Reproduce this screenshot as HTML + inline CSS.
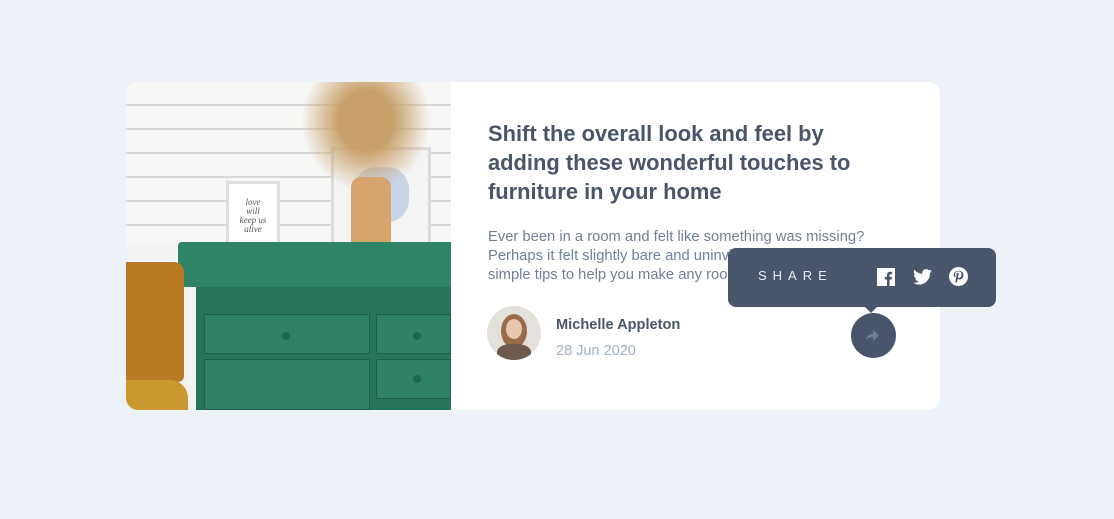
<!DOCTYPE html>
<html><head><meta charset="utf-8"><style>
*{margin:0;padding:0;box-sizing:border-box}
body{width:1114px;height:519px;background:#ecf2f8;font-family:"Liberation Sans",sans-serif;position:relative;overflow:hidden}
.card{position:absolute;left:126px;top:82px;width:814px;height:328px;background:#fff;border-radius:12px;overflow:hidden}
.img{position:absolute;left:0;top:0;width:325px;height:328px;background:#f3f3f1;overflow:hidden}
.img div{position:absolute}
h1{position:absolute;left:362px;top:37px;width:400px;font-size:21.9px;line-height:29px;color:#48556a;font-weight:bold}
p.d{position:absolute;left:362px;top:146px;width:380px;font-size:14.75px;line-height:19px;color:#6e8098}
.av{position:absolute;left:361px;top:224px;width:54px;height:54px;border-radius:50%;background:#e4e0dc;overflow:hidden}
.name{position:absolute;left:430px;top:235px;font-size:14.6px;font-weight:bold;color:#48556a}
.date{position:absolute;left:430px;top:261px;font-size:14.5px;color:#9eafc2}
.btn{position:absolute;left:851px;top:313px;width:45px;height:45px;border-radius:50%;background:#48556a}
.tip{position:absolute;left:728px;top:248px;width:268px;height:59px;background:#48556a;border-radius:8px}
.tip:after{content:"";position:absolute;left:137px;bottom:-6px;border:6px solid transparent;border-bottom:0;border-top-color:#48556a}
.share{position:absolute;left:30px;top:20px;font-size:13px;letter-spacing:6px;color:#e8edf3}
</style></head><body>
<div class="card">
 <div class="img">
  <div style="left:0;top:0;width:325px;height:160px;background:repeating-linear-gradient(180deg,#f7f7f5 0 22px,#d8d8d6 22px 24px)"></div>
  <div style="left:205px;top:65px;width:100px;height:98px;background:#f4f4f4;border:3px solid #dcdcdc"></div>
  <div style="left:228px;top:85px;width:55px;height:55px;background:#c7d5e6;border-radius:40%"></div>
  <div style="left:100px;top:99px;width:54px;height:68px;background:#fff;border:3px solid #dedede;font-family:'Liberation Serif',serif;font-style:italic;font-size:9px;line-height:9px;color:#555;text-align:center;padding-top:14px">love<br>will<br>keep us<br>alive</div>
  <div style="left:175px;top:0;width:130px;height:110px;background:radial-gradient(ellipse at 50% 35%,#c8a16a 0,#c8a16a 30%,rgba(200,160,100,0) 70%)"></div>
  <div style="left:225px;top:95px;width:40px;height:89px;background:#d6a46c;border-radius:10px 10px 4px 4px"></div>
  <div style="left:52px;top:160px;width:273px;height:45px;background:#2f8468;border-radius:4px 0 0 0"></div>
  <div style="left:70px;top:205px;width:255px;height:123px;background:#27745c"></div>
  <div style="left:78px;top:232px;width:166px;height:40px;background:#2e8066;border:1px solid #1f5e4b"></div>
  <div style="left:250px;top:232px;width:75px;height:40px;background:#2e8066;border:1px solid #1f5e4b"></div>
  <div style="left:78px;top:277px;width:166px;height:51px;background:#2e8066;border:1px solid #1f5e4b"></div>
  <div style="left:250px;top:277px;width:75px;height:40px;background:#2e8066;border:1px solid #1f5e4b"></div>
  <div style="left:156px;top:250px;width:8px;height:8px;border-radius:50%;background:#1f6650"></div>
  <div style="left:287px;top:250px;width:8px;height:8px;border-radius:50%;background:#1f6650"></div>
  <div style="left:287px;top:293px;width:8px;height:8px;border-radius:50%;background:#1f6650"></div>
  <div style="left:0;top:180px;width:58px;height:120px;background:#b97a25;border-radius:0 10px 6px 0"></div>
  <div style="left:0;top:298px;width:62px;height:30px;background:#c9982e;border-radius:0 18px 0 0"></div>
 </div>
 <h1>Shift the overall look and feel by adding these wonderful touches to furniture in your home</h1>
 <p class="d">Ever been in a room and felt like something was missing? Perhaps it felt slightly bare and uninviting. I've got some simple tips to help you make any room feel complete.</p>
 <div class="av">
  <div style="position:absolute;left:14px;top:8px;width:26px;height:34px;border-radius:50%;background:#9a6b48"></div>
  <div style="position:absolute;left:19px;top:13px;width:16px;height:20px;border-radius:50%;background:#e8c6ad"></div>
  <div style="position:absolute;left:10px;top:38px;width:34px;height:20px;border-radius:40% 40% 0 0;background:#6d5a4d"></div>
 </div>
 <div class="name">Michelle Appleton</div>
 <div class="date">28 Jun 2020</div>
</div>
<div class="btn"><svg width="45" height="45" viewBox="0 0 45 45"><path d="M22 17v4c-4 0-6 2-7 6 2-2 4-3 7-3v4l6-5.5z" fill="#6e8098"/></svg></div>
<div class="tip">
 <span class="share">SHARE</span>
 <svg style="position:absolute;left:149px;top:20px" width="18" height="18" viewBox="0 0 18 18"><rect width="18" height="18" fill="#fff"/><path d="M12.5 18v-6.5h2.2l.3-2.6h-2.5V7.3c0-.7.2-1.2 1.3-1.2h1.3V3.8c-.3 0-1-.1-1.9-.1-1.9 0-3.2 1.2-3.2 3.3v1.9H7.8v2.6H10V18z" fill="#48556a"/></svg>
 <svg style="position:absolute;left:185px;top:21px" width="19" height="16" viewBox="0 0 24 20"><path d="M24 2.4c-.9.4-1.8.6-2.8.8 1-.6 1.8-1.6 2.2-2.7-1 .6-2 1-3.1 1.2C19.3.7 18 0 16.6 0c-2.7 0-4.9 2.2-4.9 4.9 0 .4 0 .8.1 1.1C7.700 5.8 4.1 3.9 1.7.9c-.4.7-.7 1.6-.7 2.5 0 1.7.9 3.2 2.2 4.1-.8 0-1.600-.2-2.2-.6v.1c0 2.4 1.7 4.4 3.9 4.8-.4.1-.8.2-1.3.2-.3 0-.6 0-.9-.1.6 2 2.4 3.4 4.6 3.4-1.7 1.3-3.8 2.1-6.100 2.1-.4 0-.8 0-1.2-.1 2.2 1.4 4.8 2.2 7.5 2.2 9.1 0 14-7.5 14-14v-.6c1-.7 1.8-1.6 2.5-2.5z" fill="#fff"/></svg>
 <svg style="position:absolute;left:221px;top:19px" width="19" height="19" viewBox="0 0 20 20"><circle cx="10" cy="10" r="10" fill="#fff"/><path d="M10.2 4C6.8 4 5 6.3 5 8.3c0 1.2.4 2.2 1.4 2.6.2.1.3 0 .4-.2l.1-.6c.1-.2 0-.3-.1-.4-.3-.4-.5-.8-.5-1.5 0-1.9 1.4-3.6 3.7-3.6 2 0 3.1 1.2 3.1 2.9 0 2.2-1 4-2.4 4-.8 0-1.4-.7-1.2-1.5.2-1 .7-2 .7-2.7 0-.6-.3-1.100-1-1.1-.8 0-1.4.8-1.4 1.9 0 .7.2 1.2.2 1.2l-1 4.2c-.2.9-.1 2.3 0 3h.9c.3-.6.8-1.6 1-2.4l.5-1.9c.3.5 1 .9 1.8.9 2.4 0 4-2.2 4-5.1C15.2 6 13.3 4 10.2 4z" fill="#48556a"/></svg>
</div>
</body></html>
